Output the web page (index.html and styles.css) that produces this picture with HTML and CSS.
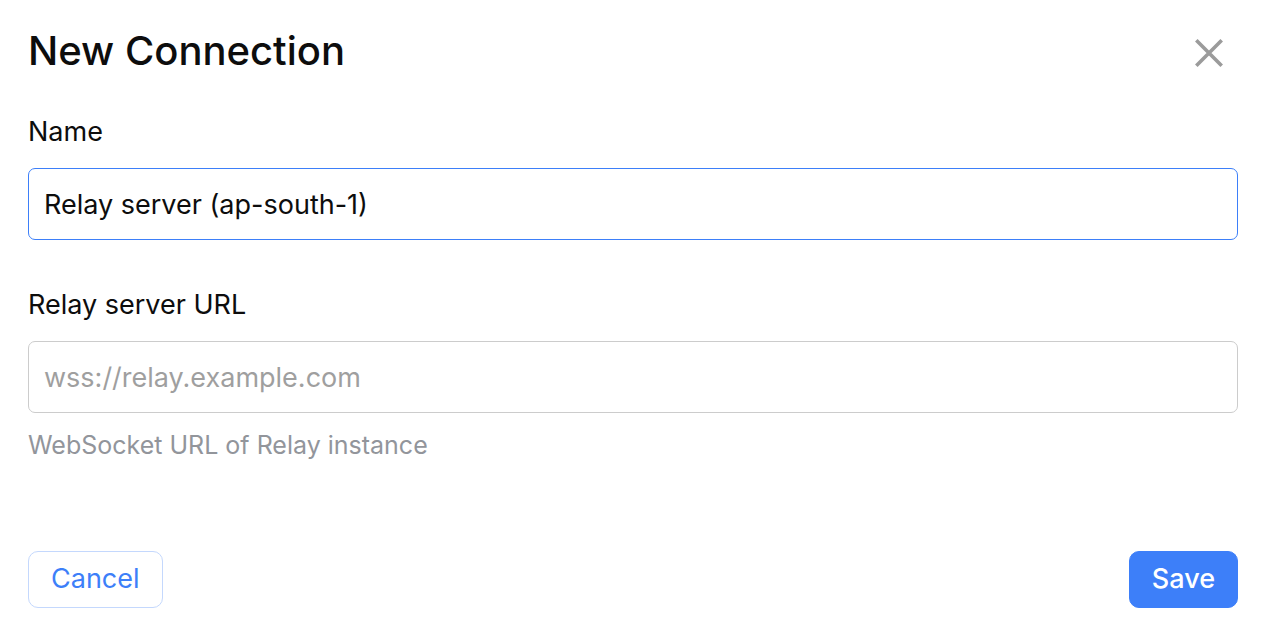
FILE: index.html
```html
<!DOCTYPE html>
<html lang="en">
<head>
<meta charset="utf-8">
<meta name="viewport" content="width=device-width, initial-scale=1">
<title>New Connection</title>
<link rel="stylesheet" href="styles.css">
</head>
<body>
<form class="dialog" aria-labelledby="dialog-title">
  <header class="dialog-header">
    <h1 class="dialog-title" id="dialog-title">New Connection</h1>
    <button class="close-button" type="button" aria-label="Close">
      <svg class="close-icon" viewBox="0 0 32 32" aria-hidden="true"><path d="M3.3 5.3 28.7 30.7M28.7 5.3 3.3 30.7"/></svg>
    </button>
  </header>
  <div class="field">
    <label class="field-label" for="name">Name</label>
    <input class="field-input field-input-active" id="name" type="text" value="Relay server (ap-south-1)">
  </div>
  <div class="field">
    <label class="field-label" for="url">Relay server URL</label>
    <input class="field-input" id="url" type="text" placeholder="wss://relay.example.com" aria-describedby="url-hint">
    <p class="field-hint" id="url-hint">WebSocket URL of Relay instance</p>
  </div>
  <footer class="dialog-footer">
    <button class="button button-secondary" type="button">Cancel</button>
    <button class="button button-primary" type="submit">Save</button>
  </footer>
</form>
</body>
</html>
```
FILE: styles.css
```css
* {
  box-sizing: border-box;
}

body {
  margin: 0;
  background: #fff;
  color: #0d0d0d;
  font-family: Inter, sans-serif;
}

.dialog {
  padding: 27px 28px 20px;
}

.dialog-header {
  display: flex;
  align-items: center;
  justify-content: space-between;
  padding-right: 13px;
  margin-bottom: 41px;
}

.dialog-title {
  margin: 0;
  font-size: 40px;
  font-weight: 500;
  line-height: 48px;
}

.close-button {
  display: flex;
  padding: 0;
  border: 0;
  background: none;
}

.close-icon {
  width: 32px;
  height: 32px;
  overflow: visible;
  fill: none;
  stroke: #9b9b9b;
  stroke-width: 3.6;
}

.field {
  display: flex;
  flex-direction: column;
  margin-bottom: 49px;
}

.field-label {
  margin-bottom: 20px;
  font-size: 27px;
  line-height: 32px;
}

.field-input {
  width: 100%;
  height: 72px;
  padding: 0 15px;
  border: 1px solid #ccc;
  border-radius: 7px;
  outline: none;
  background: #fff;
  color: #0d0d0d;
  font-family: inherit;
  font-size: 27px;
}

.field-input::placeholder {
  color: #9f9f9f;
  opacity: 1;
}

.field-input-active {
  border-color: #3d7ff9;
}

.field-hint {
  margin: 16px 0 0;
  color: #92959b;
  font-size: 25px;
  line-height: 32px;
}

.dialog-footer {
  display: flex;
  justify-content: space-between;
  margin-top: 90px;
}

.button {
  height: 57px;
  padding: 0 22px 2px;
  border: 1px solid #3d7ff9;
  border-radius: 10px;
  font-family: inherit;
  font-size: 27px;
  font-weight: 500;
}

.button-secondary {
  border-color: #c4d8fd;
  background: #fff;
  color: #3d7ff9;
  font-weight: 400;
}

.button-primary {
  background: #3d7ff9;
  color: #fff;
}
```
